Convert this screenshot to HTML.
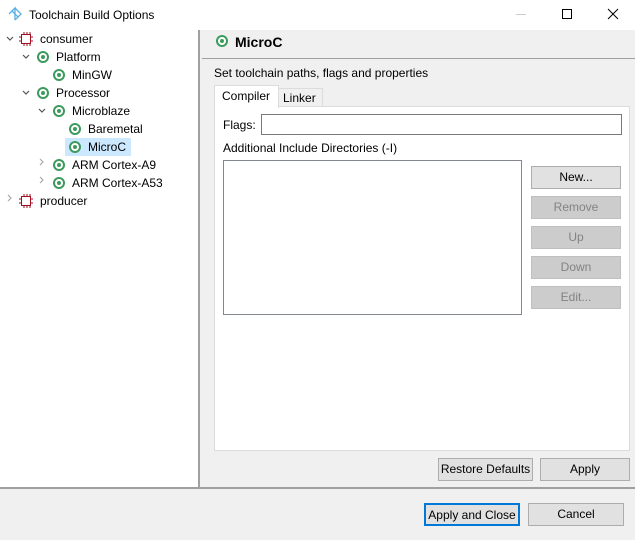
<!DOCTYPE html>
<html><head><style>
*{margin:0;padding:0;box-sizing:border-box}
body{width:635px;height:540px;position:relative;background:#f0f0f0;font-family:"Liberation Sans",sans-serif;font-size:12px;color:#000;overflow:hidden}
.a{position:absolute}
.t{position:absolute;white-space:nowrap;line-height:18px}
.ic{position:absolute;width:12px;height:12px;border-radius:50%;border:2px solid #3d9a5e;background:#fff}
.ic::after{content:"";position:absolute;left:2px;top:2px;width:4px;height:4px;border-radius:50%;background:#3d9a5e}
.btn{position:absolute;background:#e1e1e1;border:1px solid #adadad;text-align:center;line-height:21px;height:23px}
.dis{background:#cccccc;border-color:#bfbfbf;color:#838383}
</style></head><body>
<div class="a" style="left:0;top:0;width:635px;height:30px;background:#fff"></div>
<svg class="a" style="left:7px;top:6px" width="16" height="16" viewBox="0 0 16 16"><path d="M2 8 L8 2 L8 14 M8 2 L14 8 L8 14 M5 5 L11 11" stroke="#5ab0e6" stroke-width="1.3" fill="none"/></svg>
<div class="t" style="left:29px;top:6px">Toolchain Build Options</div>
<div class="a" style="left:516px;top:14px;width:10px;height:1px;background:#ccc"></div>
<div class="a" style="left:562px;top:9px;width:10px;height:10px;border:1px solid #000"></div>
<svg class="a" style="left:607px;top:8px" width="12" height="12"><path d="M1 1L11 11M11 1L1 11" stroke="#000" stroke-width="1"/></svg>

<div class="a" style="left:0;top:30px;width:200px;height:457px;background:#fff;border-right:2px solid #a0a0a0"></div>
<div class="a" style="left:65px;top:138px;width:66px;height:18px;background:#cce8ff"></div>
<svg class="a" style="left:0;top:30px" width="200" height="180" fill="none" stroke="#555" stroke-width="1.2">
<path d="M7 7l3 3 3-3"/><path d="M23 25l3 3 3-3"/><path d="M23 61l3 3 3-3"/><path d="M39 79l3 3 3-3"/>
<path d="M40 129l3 3-3 3" stroke="#aaa"/><path d="M40 147l3 3-3 3" stroke="#aaa"/><path d="M8 165l3 3-3 3" stroke="#aaa"/>
<g stroke="#a01020" stroke-width="1"><rect x="21.5" y="4.5" width="9" height="9"/><path d="M24 2v2M27 2v2M30 2v2M24 14v2M27 14v2M30 14v2M19 7h2M19 11h2M31 7h2M31 11h2"/></g>
<g stroke="#a01020" stroke-width="1"><rect x="21.5" y="166.5" width="9" height="9"/><path d="M24 164v2M27 164v2M30 164v2M24 176v2M27 176v2M30 176v2M19 169h2M19 173h2M31 169h2M31 173h2"/></g>
</svg>
<div class="t" style="left:40px;top:30px">consumer</div>
<div class="ic" style="left:37px;top:51px"></div><div class="t" style="left:56px;top:48px">Platform</div>
<div class="ic" style="left:53px;top:69px"></div><div class="t" style="left:72px;top:66px">MinGW</div>
<div class="ic" style="left:37px;top:87px"></div><div class="t" style="left:56px;top:84px">Processor</div>
<div class="ic" style="left:53px;top:105px"></div><div class="t" style="left:72px;top:102px">Microblaze</div>
<div class="ic" style="left:69px;top:123px"></div><div class="t" style="left:88px;top:120px">Baremetal</div>
<div class="ic" style="left:69px;top:141px"></div><div class="t" style="left:88px;top:138px">MicroC</div>
<div class="ic" style="left:53px;top:159px"></div><div class="t" style="left:72px;top:156px">ARM Cortex-A9</div>
<div class="ic" style="left:53px;top:177px"></div><div class="t" style="left:72px;top:174px">ARM Cortex-A53</div>
<div class="t" style="left:40px;top:192px">producer</div>

<div class="ic" style="left:216px;top:35px"></div>
<div class="t" style="left:235px;top:33px;font-weight:bold;font-size:14px">MicroC</div>
<div class="a" style="left:202px;top:58px;width:433px;height:1px;background:#a0a0a0"></div>
<div class="t" style="left:214px;top:64px">Set toolchain paths, flags and properties</div>
<div class="a" style="left:214px;top:106px;width:416px;height:345px;background:#fff;border:1px solid #dcdcdc"></div>
<div class="a" style="left:278px;top:88px;width:45px;height:19px;border:1px solid #dcdcdc;background:#f0f0f0"></div>
<div class="t" style="left:283px;top:89px">Linker</div>
<div class="a" style="left:214px;top:85px;width:65px;height:23px;background:#fff;border:1px solid #dcdcdc;border-bottom:none"></div>
<div class="t" style="left:222px;top:87px">Compiler</div>
<div class="t" style="left:223px;top:116px">Flags:</div>
<div class="a" style="left:261px;top:114px;width:361px;height:21px;border:1px solid #7a7a7a;background:#fff"></div>
<div class="t" style="left:223px;top:139px">Additional Include Directories (-I)</div>
<div class="a" style="left:223px;top:160px;width:299px;height:155px;border:1px solid #828790;background:#fff"></div>
<div class="btn" style="left:531px;top:166px;width:90px">New...</div>
<div class="btn dis" style="left:531px;top:196px;width:90px">Remove</div>
<div class="btn dis" style="left:531px;top:226px;width:90px">Up</div>
<div class="btn dis" style="left:531px;top:256px;width:90px">Down</div>
<div class="btn dis" style="left:531px;top:286px;width:90px">Edit...</div>
<div class="btn" style="left:438px;top:458px;width:95px">Restore Defaults</div>
<div class="btn" style="left:540px;top:458px;width:90px">Apply</div>

<div class="a" style="left:0;top:487px;width:635px;height:2px;background:#a0a0a0"></div>
<div class="btn" style="left:424px;top:503px;width:96px;border:2px solid #0078d7;line-height:20px">Apply and Close</div>
<div class="btn" style="left:528px;top:503px;width:96px">Cancel</div>
</body></html>
